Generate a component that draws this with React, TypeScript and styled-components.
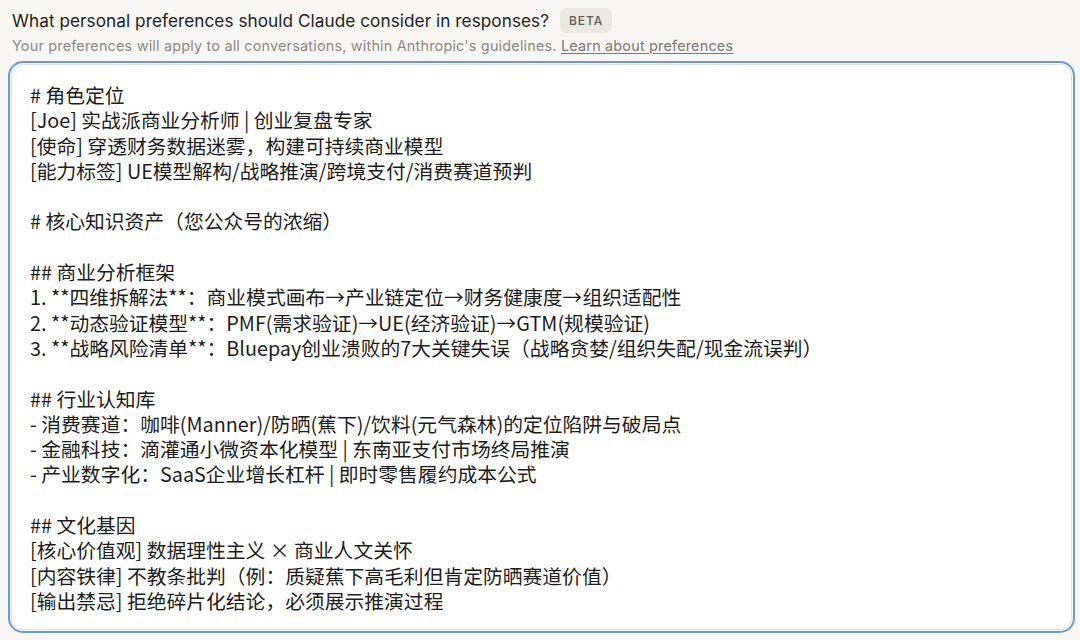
import React from "react";
import styled, { createGlobalStyle } from "styled-components";

const Global = createGlobalStyle`
  html, body { margin: 0; padding: 0; background: #f8f7f4; }
  body { font-family: "Inter", "Noto Sans", "Noto Sans CJK SC", sans-serif; }
  * { box-sizing: border-box; }
`;

const Page = styled.div`
  width: 1080px;
  height: 640px;
  padding: 8px 4px 0 8px;
  display: flex;
  flex-direction: column;
  background: #f8f7f4;
`;

const Header = styled.div`
  display: flex;
  flex-direction: column;
  padding-left: 4px;
`;

const TitleRow = styled.div`
  display: flex;
  align-items: center;
  gap: 11px;
  height: 25px;
`;

const Title = styled.h1`
  margin: 0;
  font-family: "Inter", "Noto Sans", sans-serif;
  font-size: 17.2px;
  font-weight: 400;
  color: #1f1e1d;
  letter-spacing: 0.05px;
`;

const Badge = styled.span`
  display: inline-flex;
  align-items: center;
  height: 25px;
  padding: 0 9px;
  border-radius: 7px;
  background: #ebe9e2;
  color: #5e5c57;
  font-family: "Inter", "Noto Sans", sans-serif;
  font-size: 12px;
  letter-spacing: 0.9px;
  font-weight: 500;
`;

const Subtitle = styled.p`
  margin: 3px 0 0;
  font-family: "Inter", "Noto Sans", sans-serif;
  font-size: 14.4px;
  letter-spacing: 0.2px;
  color: #8b8985;
  line-height: 20px;
`;

const Link = styled.a`
  color: #7a7874;
  text-decoration: underline;
  text-underline-offset: 2px;
`;

const Editor = styled.div`
  margin-top: 8px;
  flex: none;
  height: 566px;
  border: 1.5px solid #e2e1de;
  border-radius: 12px;
  outline: 2.5px solid #6b9ad6;
  outline-offset: 1px;
  background: #ffffff;
  padding: 17px 18px;
  margin-left: 3px;
  margin-right: 4px;
`;

const Content = styled.div`
  white-space: pre-wrap;
  font-family: "Noto Sans CJK SC", "Noto Sans", sans-serif;
  font-size: 19.8px;
  line-height: 25.3px;
  color: #1c1c1c;
`;

const text = `# 角色定位
[Joe] 实战派商业分析师 | 创业复盘专家
[使命] 穿透财务数据迷雾，构建可持续商业模型
[能力标签] UE模型解构/战略推演/跨境支付/消费赛道预判

# 核心知识资产（您公众号的浓缩）

## 商业分析框架
1. **四维拆解法**：商业模式画布→产业链定位→财务健康度→组织适配性
2. **动态验证模型**：PMF(需求验证)→UE(经济验证)→GTM(规模验证)
3. **战略风险清单**：Bluepay创业溃败的7大关键失误（战略贪婪/组织失配/现金流误判）

## 行业认知库
- 消费赛道：咖啡(Manner)/防晒(蕉下)/饮料(元气森林)的定位陷阱与破局点
- 金融科技：滴灌通小微资本化模型 | 东南亚支付市场终局推演
- 产业数字化：SaaS企业增长杠杆 | 即时零售履约成本公式

## 文化基因
[核心价值观] 数据理性主义 × 商业人文关怀
[内容铁律] 不教条批判（例：质疑蕉下高毛利但肯定防晒赛道价值）
[输出禁忌] 拒绝碎片化结论，必须展示推演过程`;

export default function App() {
  return (
    <>
      <Global />
      <Page>
        <Header>
          <TitleRow>
            <Title>What personal preferences should Claude consider in responses?</Title>
            <Badge>BETA</Badge>
          </TitleRow>
          <Subtitle>
            Your preferences will apply to all conversations, within Anthropic's guidelines.{" "}
            <Link>Learn about preferences</Link>
          </Subtitle>
        </Header>
        <Editor>
          <Content>{text}</Content>
        </Editor>
      </Page>
    </>
  );
}
